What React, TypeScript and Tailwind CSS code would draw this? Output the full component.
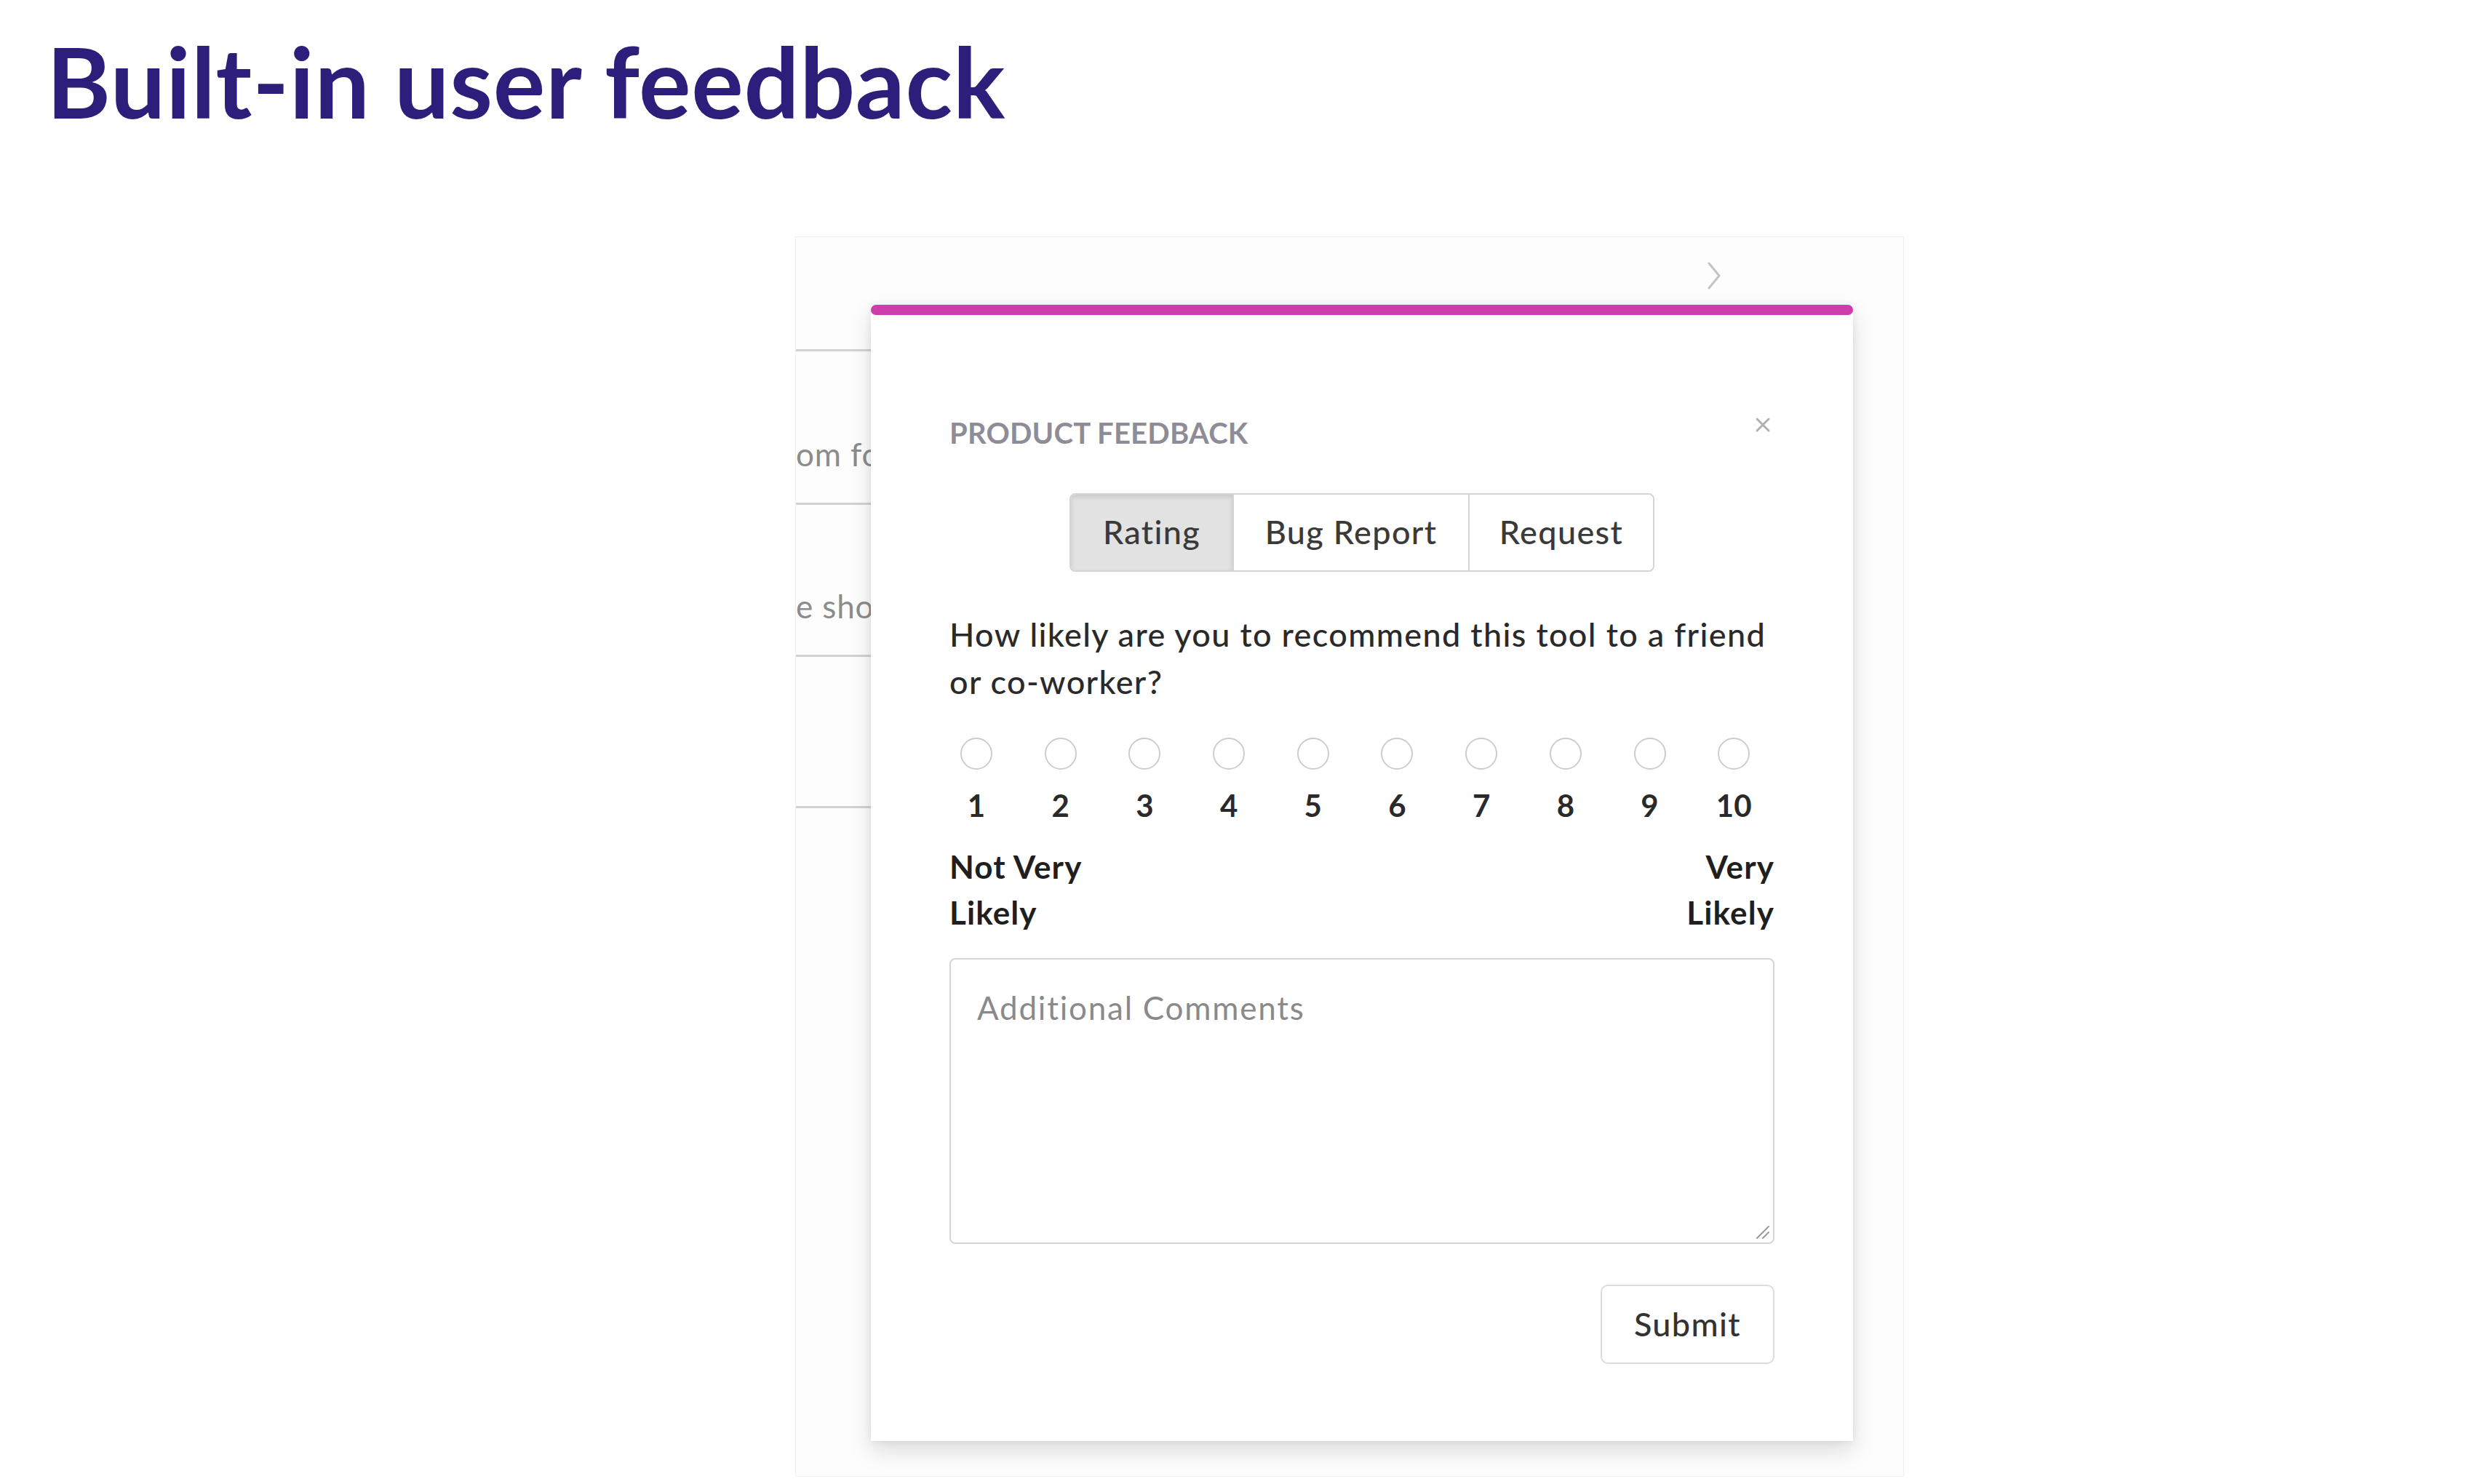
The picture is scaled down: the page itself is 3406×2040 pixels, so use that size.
import React from "react";

const font = { fontFamily: "Lato, 'Noto Sans', sans-serif" };

function Radio({ n }: { n: number }) {
  return (
    <div className="flex w-[74px] flex-col items-center">
      <div className="h-[44px] w-[44px] rounded-full border-[2px] border-[#cdcdcd] bg-white" />
      <div className="mt-[24px] h-[50px] text-[42px] font-bold leading-[50px] text-[#2a2a2a]">{n}</div>
    </div>
  );
}

export default function App() {
  const nums = [1, 2, 3, 4, 5, 6, 7, 8, 9, 10];
  return (
    <div className="relative h-[2040px] w-[3406px] overflow-hidden bg-white" style={font}>
      <h1 className="pl-[64px] pt-[45px] text-[134px] font-bold leading-[134px] tracking-[0.005em] text-[#2c1e7a]">
        Built-in user feedback
      </h1>

      {/* background panel */}
      <div className="relative ml-[1093px] mt-[146px] h-[1705px] w-[1524px] overflow-hidden border border-[#f1f1f1] bg-[#fdfdfd]">
        <div className="flex justify-end pr-[248px] pt-[32px]">
          <svg width="24" height="42" viewBox="0 0 24 42" fill="none">
            <path d="M5 4 L19 21 L5 38" stroke="#c4c4c4" strokeWidth="3" strokeLinecap="round" strokeLinejoin="round" />
          </svg>
        </div>
        <div className="mt-[80px] flex w-[900px] flex-col border-t-[3px] border-[#d2d2d2] text-[44px] leading-[50px] tracking-[0.02em] text-[#8c8c8c]">
          <div className="flex h-[211px] items-end border-b-[3px] border-[#d2d2d2] pb-[42px]">om form field</div>
          <div className="flex h-[209px] items-end border-b-[3px] border-[#d2d2d2] pb-[42px]">e show</div>
          <div className="h-[208px] border-b-[3px] border-[#d2d2d2]" />
        </div>

        {/* feedback card */}
        <div className="absolute left-[103px] top-[93px] w-[1350px] bg-white shadow-[0_14px_30px_rgba(0,0,0,0.13),0_0_10px_rgba(0,0,0,0.07)]">
          <div className="h-[14px] rounded-full bg-[#cf3dac]" />
          <div className="flex flex-col px-[108px] pb-[106px]">
            <div className="mt-[140px] flex h-[44px] items-center justify-between">
              <span className="text-[40px] font-bold tracking-[0.005em] text-[#8e8d97]">PRODUCT FEEDBACK</span>
              <svg width="28" height="28" viewBox="0 0 28 28" className="mr-[2px] -mt-[22px]">
                <path d="M6 6 L22 22 M22 6 L6 22" stroke="#b0b0b0" strokeWidth="3" strokeLinecap="round" />
              </svg>
            </div>

            <div className="mt-[61px] flex justify-center">
              <div className="flex h-[108px] overflow-hidden rounded-[8px] border-[2px] border-[#d4d4d4] text-[45px] font-medium tracking-[0.03em] text-[#3a3a3a]">
                <div className="flex w-[222px] items-center justify-center bg-[#e2e2e2] shadow-[inset_0_3px_6px_rgba(0,0,0,0.12)]">Rating</div>
                <div className="flex w-[324px] items-center justify-center border-l-[2px] border-[#d4d4d4] bg-white">Bug Report</div>
                <div className="flex w-[254px] items-center justify-center border-l-[2px] border-[#d4d4d4] bg-white">Request</div>
              </div>
            </div>

            <p className="mt-[54px] whitespace-nowrap text-[45px] font-medium leading-[65px] tracking-[0.03em] text-[#2a2a2a]">
              How likely are you to recommend this tool to a friend
              <br />
              or co-worker?
            </p>

            <div className="mt-[44px] flex gap-[41.7px]">
              {nums.map((n) => (
                <Radio key={n} n={n} />
              ))}
            </div>

            <div className="mt-[28px] flex justify-between text-[44px] font-bold leading-[63px] tracking-[0.025em] text-[#1f1f1f]">
              <div>
                Not Very
                <br />
                Likely
              </div>
              <div className="text-right">
                Very
                <br />
                Likely
              </div>
            </div>

            <div className="relative mt-[31px]">
              <textarea
                className="block h-[393px] w-full resize-none rounded-[8px] border-[2px] border-[#d6d6d6] bg-white pl-[36px] pt-[41px] text-[44px] leading-[50px] tracking-[0.04em] text-[#333] outline-none placeholder:text-[#8a8a8a]"
                placeholder="Additional Comments"
                style={font}
              />
              <svg className="absolute bottom-[6px] right-[6px]" width="22" height="22" viewBox="0 0 22 22">
                <path d="M20 4 L4 20 M20 12 L12 20" stroke="#9a9a9a" strokeWidth="2" strokeLinecap="round" />
              </svg>
            </div>

            <div className="mt-[56px] flex justify-end">
              <button className="h-[109px] w-[239px] rounded-[10px] border-[2px] border-[#dcdcdc] bg-white text-[45px] font-medium tracking-[0.03em] text-[#333]" style={font}>
                Submit
              </button>
            </div>
          </div>
        </div>
      </div>
    </div>
  );
}
